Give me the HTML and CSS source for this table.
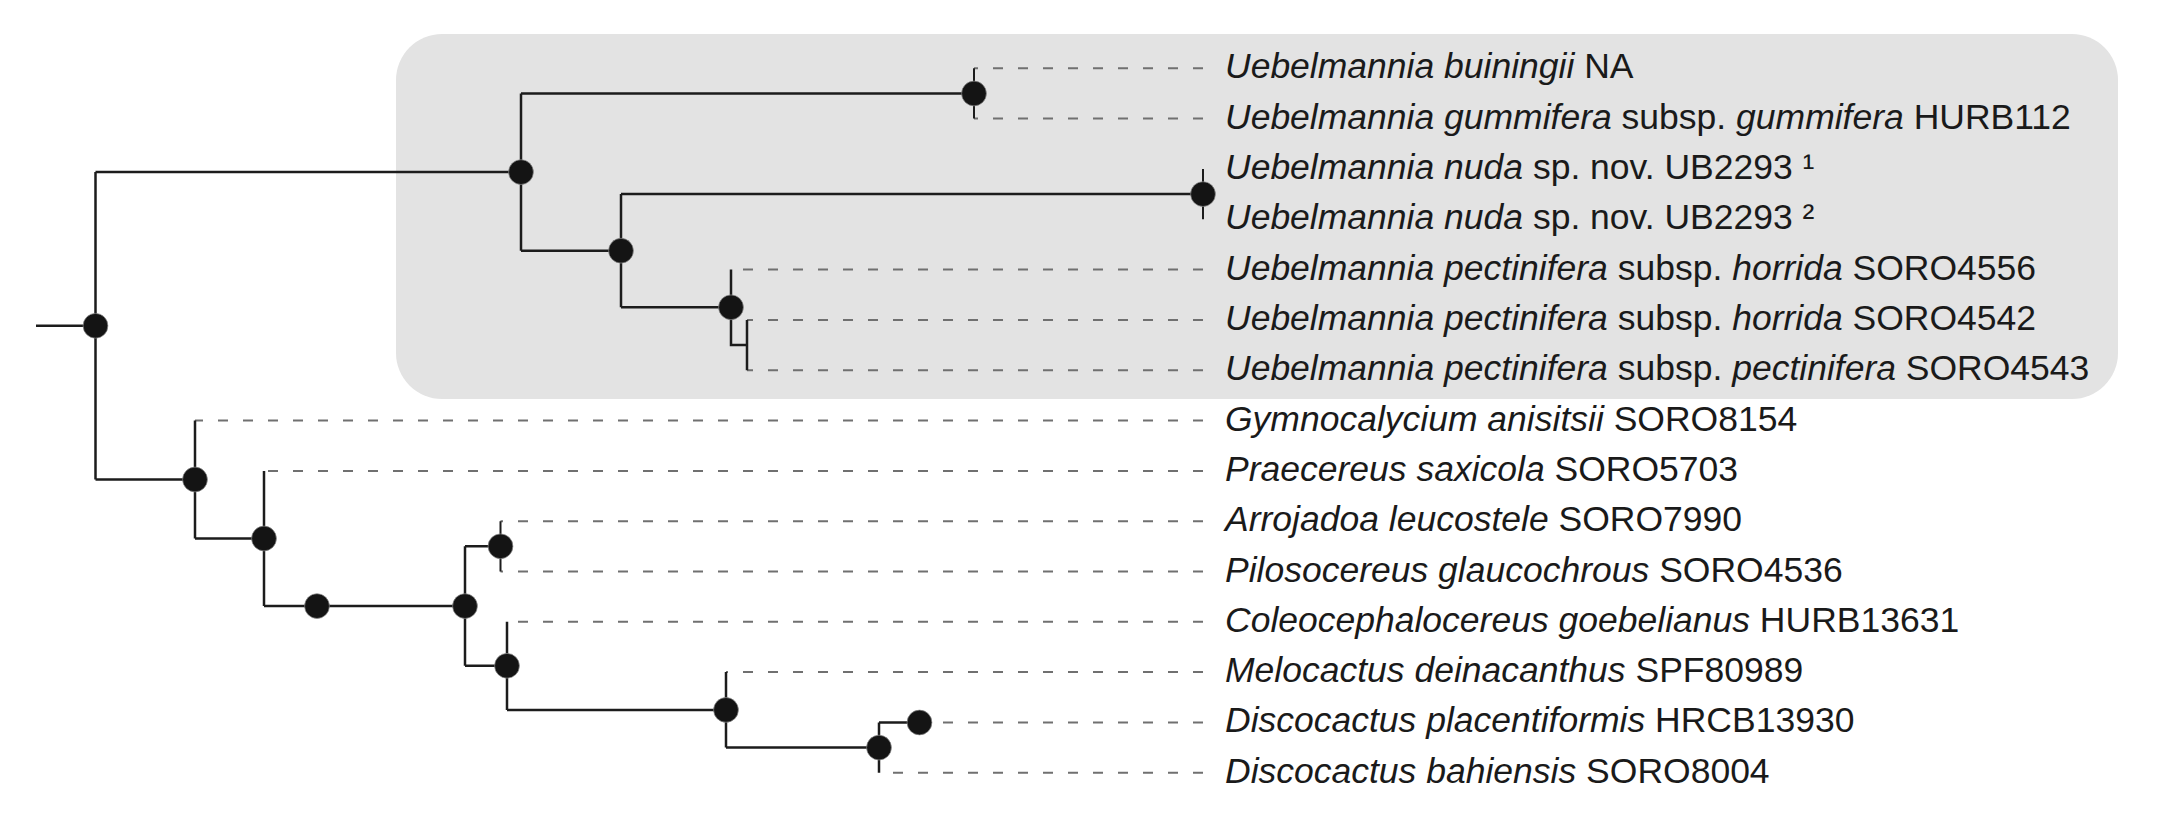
FILE: index.html
```html
<!DOCTYPE html>
<html lang="en">
<head>
<meta charset="utf-8">
<title>Phylogenetic tree</title>
<link rel="stylesheet" href="styles.css">
</head>
<body>
<div class="figure">
  <div class="clade-bg"></div>
  <svg class="tree" width="2161" height="825" viewBox="0 0 2161 825" xmlns="http://www.w3.org/2000/svg">
    <g class="dash">
      <path d="M1203 68.3 H974 M1203 118.6 H974"/>
      <path d="M1203 269.6 H731 M1203 319.9 H747 M1203 370.2 H747"/>
      <path d="M1203 420.5 H195 M1203 470.9 H264 M1203 521.2 H500.5 M1203 571.5 H500.5"/>
      <path d="M1203 621.8 H507 M1203 672.1 H726 M1203 722.5 H919.5 M1203 772.8 H879"/>
    </g>
    <g class="branch">
      <path d="M36 325.8 H95.5 M95.5 172.1 V479.5 M95.5 172.1 H521 M95.5 479.5 H195"/>
      <path d="M521 93.5 V250.7 M521 93.5 H974 M521 250.7 H621"/>
      <path d="M621 194.1 V307.3 M621 194.1 H1203 M621 307.3 H731"/>
      <path d="M731 269.6 V345.1 H747 M747 319.9 V370.2"/>
      <path d="M195 420.5 V538.5 M195 538.5 H264 M264 470.9 V606.1 M264 606.1 H465"/>
      <path d="M465 546.3 V665.8 M465 546.3 H500.5 M465 665.8 H507"/>
      <path d="M507 621.8 V709.9 M507 709.9 H726 M726 672.1 V747.6 M726 747.6 H879"/>
      <path d="M879 722.5 V772.8 M879 722.5 H919.5"/>
    </g>
    <g class="tick">
      <path d="M974 68.3 V118.6 M1203 168.9 V219.3 M500.5 521.2 V571.5"/>
    </g>
    <g class="node">
      <circle cx="95.5" cy="325.8" r="12.4"/>
      <circle cx="521" cy="172.1" r="12.4"/>
      <circle cx="621" cy="250.7" r="12.4"/>
      <circle cx="974" cy="93.5" r="12.4"/>
      <circle cx="1203" cy="194.1" r="12.4"/>
      <circle cx="731" cy="307.3" r="12.4"/>
      <circle cx="195" cy="479.5" r="12.4"/>
      <circle cx="264" cy="538.5" r="12.4"/>
      <circle cx="317" cy="606.1" r="12.4"/>
      <circle cx="465" cy="606.1" r="12.4"/>
      <circle cx="500.5" cy="546.3" r="12.4"/>
      <circle cx="507" cy="665.8" r="12.4"/>
      <circle cx="726" cy="709.9" r="12.4"/>
      <circle cx="879" cy="747.6" r="12.4"/>
      <circle cx="919.5" cy="722.5" r="12.4"/>
    </g>
  </svg>
  <ul class="labels">
    <li><i>Uebelmannia buiningii</i> NA</li>
    <li><i>Uebelmannia gummifera</i> subsp. <i>gummifera</i> HURB112</li>
    <li><i>Uebelmannia nuda</i> sp. nov. UB2293 ¹</li>
    <li><i>Uebelmannia nuda</i> sp. nov. UB2293 ²</li>
    <li><i>Uebelmannia pectinifera</i> subsp. <i>horrida</i> SORO4556</li>
    <li><i>Uebelmannia pectinifera</i> subsp. <i>horrida</i> SORO4542</li>
    <li><i>Uebelmannia pectinifera</i> subsp. <i>pectinifera</i> SORO4543</li>
    <li><i>Gymnocalycium anisitsii</i> SORO8154</li>
    <li><i>Praecereus saxicola</i> SORO5703</li>
    <li><i>Arrojadoa leucostele</i> SORO7990</li>
    <li><i>Pilosocereus glaucochrous</i> SORO4536</li>
    <li><i>Coleocephalocereus goebelianus</i> HURB13631</li>
    <li><i>Melocactus deinacanthus</i> SPF80989</li>
    <li><i>Discocactus placentiformis</i> HRCB13930</li>
    <li><i>Discocactus bahiensis</i> SORO8004</li>
  </ul>
</div>
</body>
</html>
```

FILE: styles.css
```css
html, body {
  margin: 0;
  padding: 0;
  background: #ffffff;
}

.figure {
  position: relative;
  width: 2161px;
  height: 825px;
  overflow: hidden;
  font-family: "Liberation Sans", Arial, Helvetica, sans-serif;
}

.clade-bg {
  position: absolute;
  left: 396px;
  top: 34px;
  width: 1722px;
  height: 365px;
  border-radius: 46px;
  background: #e3e3e3;
}

.tree {
  position: absolute;
  left: 0;
  top: 0;
}

.dash path {
  fill: none;
  stroke: #707070;
  stroke-width: 2;
  stroke-dasharray: 10 15;
}

.branch path {
  fill: none;
  stroke: #1c1c1c;
  stroke-width: 2.5;
}

.tick path {
  fill: none;
  stroke: #1c1c1c;
  stroke-width: 2;
}

.node circle {
  fill: #141414;
  stroke: rgba(140, 140, 140, 0.7);
  stroke-width: 1;
}

.labels {
  position: relative;
  list-style: none;
  margin: 0;
  padding: 41.4px 0 0 1225px;
  font-size: 35.5px;
  line-height: 50.32px;
  color: #1a1a1a;
}

.labels li {
  white-space: nowrap;
}

.labels i {
  font-style: italic;
}
```
